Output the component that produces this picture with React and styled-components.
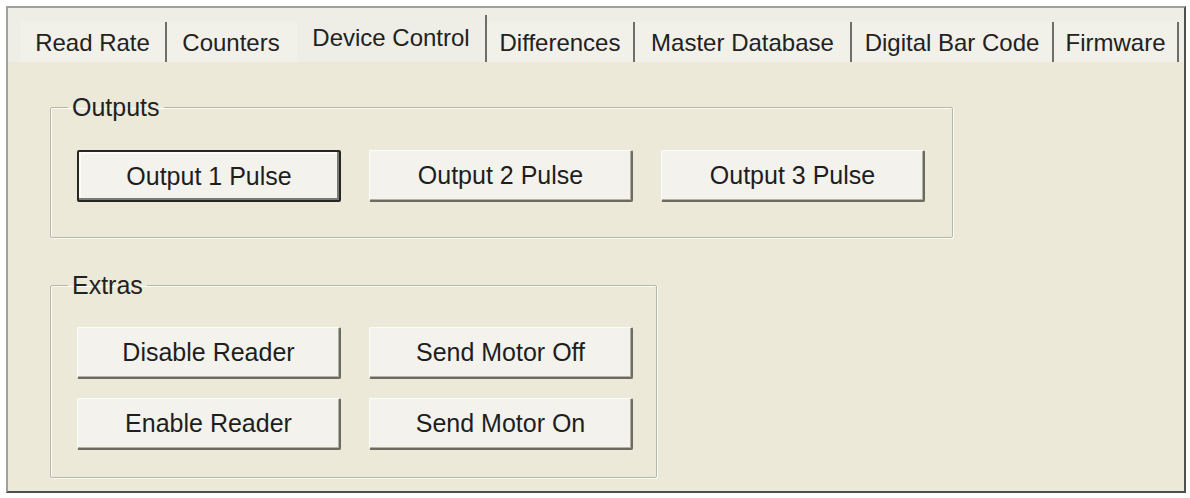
import styled, { createGlobalStyle } from 'styled-components';

const GlobalStyle = createGlobalStyle`
  html, body {
    margin: 0;
    padding: 0;
    background: #ffffff;
  }
  body {
    font-family: "Liberation Sans", Arial, sans-serif;
    color: #1e1e1e;
  }
`;

const tabs = [
  { label: 'Read Rate', width: 147, sep: true },
  { label: 'Counters', width: 130, sep: false },
  { label: 'Device Control', width: 190, sep: true, active: true },
  { label: 'Differences', width: 148, sep: true },
  { label: 'Master Database', width: 217, sep: true },
  { label: 'Digital Bar Code', width: 202, sep: true },
  { label: 'Firmware', width: 125, sep: true },
];

const App = () => {
  return (
    <Page>
      <GlobalStyle />
      <Frame>
        <TabRow>
          {tabs.map((t) => (
            <Tab key={t.label} $width={t.width} $sep={t.sep} $active={t.active}>
              {t.label}
            </Tab>
          ))}
        </TabRow>
        <Panel>
          <Group $width={903}>
            <Legend>Outputs</Legend>
            <ButtonRow>
              <Button $default>Output 1 Pulse</Button>
              <Button>Output 2 Pulse</Button>
              <Button>Output 3 Pulse</Button>
            </ButtonRow>
          </Group>
          <Group $width={607} $padBottom={27}>
            <Legend>Extras</Legend>
            <ButtonGrid>
              <Button>Disable Reader</Button>
              <Button>Send Motor Off</Button>
              <Button>Enable Reader</Button>
              <Button>Send Motor On</Button>
            </ButtonGrid>
          </Group>
        </Panel>
      </Frame>
    </Page>
  );
};

const Page = styled.div`
  padding: 6px;
`;

const Frame = styled.div`
  width: 1180px;
  height: 487px;
  box-sizing: border-box;
  border: 2px solid;
  border-color: #a0a09a #4f4f4b #4f4f4b #a0a09a;
  background: #ece9d8;
  display: flex;
  flex-direction: column;
`;

const TabRow = styled.div`
  height: 54px;
  box-sizing: border-box;
  padding: 7px 0 0 12px;
  display: flex;
  align-items: flex-end;
  background: #efeee6;
`;

const Tab = styled.div`
  width: ${(p) => p.$width}px;
  height: ${(p) => (p.$active ? 47 : 40)}px;
  line-height: ${(p) => (p.$active ? 46 : 42)}px;
  box-sizing: border-box;
  font-size: 24px;
  text-align: center;
  white-space: nowrap;
  background: ${(p) => (p.$active ? '#efeee6' : '#f1f0e9')};
  border-right: ${(p) => (p.$sep ? '2px solid #6f6f69' : '2px solid transparent')};
  color: #222;
`;

const Panel = styled.div`
  flex: 1;
  padding: 31px 0 0 42px;
  display: flex;
  flex-direction: column;
  align-items: flex-start;
  gap: 33px;
`;

const Group = styled.fieldset`
  width: ${(p) => p.$width}px;
  box-sizing: border-box;
  margin: 0;
  padding: 29px 20px ${(p) => p.$padBottom || 35}px 26px;
  border: 1px solid #b8b6a8;
  border-radius: 2px;
  box-shadow: 1px 1px 0 #fbfbf8, inset 1px 1px 0 #fbfbf8;
`;

const Legend = styled.legend`
  margin-left: -9px;
  padding: 0 4px;
  font-size: 25px;
  line-height: 28px;
  color: #222;
`;

const ButtonRow = styled.div`
  display: flex;
  gap: 28px;
`;

const ButtonGrid = styled.div`
  display: grid;
  grid-template-columns: 264px 264px;
  column-gap: 28px;
  row-gap: 19px;
  margin-top: -1px;
`;

const Button = styled.button`
  width: 264px;
  height: 52px;
  box-sizing: border-box;
  padding: 0;
  font-family: "Liberation Sans", Arial, sans-serif;
  font-size: 25px;
  color: #1e1e1e;
  background: #f3f2ec;
  border-radius: 2px;
  border-style: solid;
  border-width: ${(p) => (p.$default ? '2px' : '1px 2px 2px 1px')};
  border-color: ${(p) =>
    p.$default ? '#262624' : '#fcfcfa #6d6b60 #6d6b60 #fcfcfa'};
  box-shadow: ${(p) =>
    p.$default
      ? 'inset -2px -2px 0 #7d7b70, inset 2px 2px 0 #fcfcfa'
      : 'inset -1px -1px 0 #b3b1a3'};
  display: flex;
  align-items: center;
  justify-content: center;
`;

export default App;
